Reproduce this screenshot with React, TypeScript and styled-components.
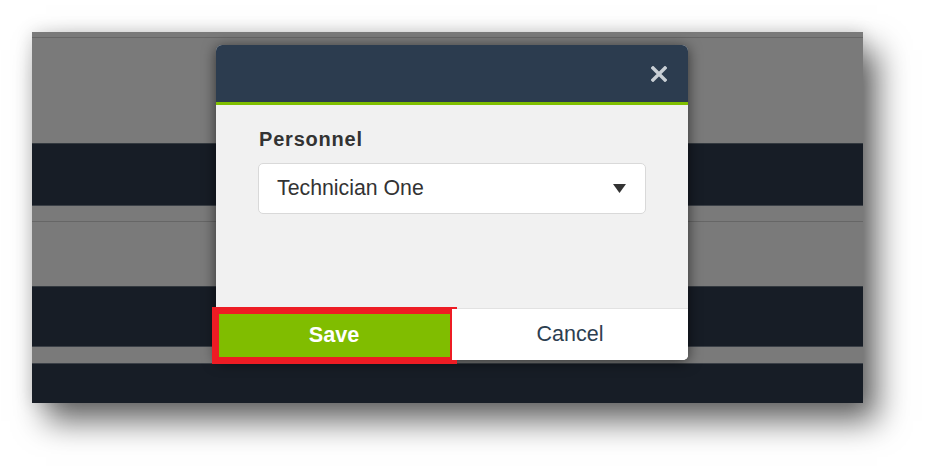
import React from "react";
import styled, { createGlobalStyle } from "styled-components";

const Global = createGlobalStyle`
  html, body { margin: 0; padding: 0; background: #ffffff; }
  body { width: 928px; height: 468px; overflow: hidden; font-family: "Liberation Sans", Arial, sans-serif; }
  * { box-sizing: border-box; }
`;

const Page = styled.div`
  width: 928px;
  height: 468px;
  padding: 32px 0 0 32px;
  background: #ffffff;
`;

const Shot = styled.div`
  position: relative;
  width: 831px;
  height: 371px;
  display: flex;
  flex-direction: column;
  box-shadow: 14px 18px 30px rgba(0, 0, 0, 0.6), 0 0 16px rgba(0, 0, 0, 0.14);
`;

type BandProps = { $tone: "gray" | "dark"; $h: number; $top?: string; $bottom?: string };

const Band = styled.div<BandProps>`
  flex: 0 0 ${(p) => p.$h}px;
  height: ${(p) => p.$h}px;
  background: ${(p) => (p.$tone === "gray" ? "#7a7a7a" : "#171d26")};
  border-top: ${(p) => (p.$top ? `1px solid ${p.$top}` : "none")};
  border-bottom: ${(p) => (p.$bottom ? `1px solid ${p.$bottom}` : "none")};
`;

const Modal = styled.div`
  position: absolute;
  left: 184px;
  top: 13px;
  width: 472px;
  height: 315px;
  display: flex;
  flex-direction: column;
  border-radius: 6px;
  background: #f1f1f1;
  box-shadow: 0 2px 14px rgba(0, 0, 0, 0.6);
`;

const Header = styled.div`
  flex: 0 0 60px;
  display: flex;
  align-items: center;
  justify-content: flex-end;
  padding: 1px 20px 0 0;
  background: #2c3c4f;
  border-radius: 6px 6px 0 0;
  border-bottom: 3px solid #80bf00;
`;

const CloseButton = styled.button`
  width: 18px;
  height: 18px;
  padding: 0;
  border: 0;
  background: transparent;
  display: flex;
  align-items: center;
  justify-content: center;
  cursor: pointer;
`;

const Body = styled.div`
  flex: 1 1 auto;
  padding: 22px 42px 0 42px;
  display: flex;
  flex-direction: column;
`;

const Label = styled.div`
  font-size: 20px;
  line-height: 24px;
  font-weight: 700;
  letter-spacing: 0.8px;
  color: #333333;
  padding-left: 1px;
  margin-bottom: 12px;
`;

const Select = styled.div`
  height: 51px;
  display: flex;
  align-items: center;
  justify-content: space-between;
  padding: 0 19px 0 18px;
  background: #ffffff;
  border: 1px solid #d9d9d9;
  border-radius: 5px;
  font-size: 21.3px;
  color: #333333;
`;

const Footer = styled.div`
  flex: 0 0 52px;
  display: flex;
  border-top: 1px solid #e2e2e2;
  background: #ffffff;
  border-radius: 0 0 5px 5px;
`;

const FooterButton = styled.button<{ $primary?: boolean }>`
  position: relative;
  flex: 1 1 50%;
  height: 51px;
  border: 0;
  margin: 0;
  padding: 0;
  font-family: "Liberation Sans", Arial, sans-serif;
  font-size: ${(p) => (p.$primary ? "21.7px" : "21.5px")};
  font-weight: ${(p) => (p.$primary ? 700 : 400)};
  color: ${(p) => (p.$primary ? "#ffffff" : "#2c3e50")};
  background: ${(p) => (p.$primary ? "#80bd00" : "#ffffff")};
  border-radius: ${(p) => (p.$primary ? "0 0 0 5px" : "0 0 5px 0")};
  cursor: pointer;
`;

const Highlight = styled.span`
  position: absolute;
  left: -4px;
  top: -2px;
  right: -5px;
  bottom: -4px;
  border: 7px solid #ed1c24;
  pointer-events: none;
`;

export default function App() {
  return (
    <>
      <Global />
      <Page>
        <Shot>
          <Band $tone="gray" $h={6} $bottom="#666666" />
          <Band $tone="gray" $h={105} />
          <Band $tone="dark" $h={63} $top="#33393f" $bottom="#3b4047" />
          <Band $tone="gray" $h={16} $bottom="#666666" />
          <Band $tone="gray" $h={64} />
          <Band $tone="dark" $h={61} $top="#33393f" $bottom="#3b4047" />
          <Band $tone="gray" $h={17} $bottom="#3b4047" />
          <Band $tone="dark" $h={39} />
          <Modal>
            <Header>
              <CloseButton aria-label="Close">
                <svg width="16" height="16" viewBox="0 0 16 16">
                  <path d="M2 2 L14 14 M14 2 L2 14" stroke="#c9cfd5" strokeWidth="3.4" strokeLinecap="square" />
                </svg>
              </CloseButton>
            </Header>
            <Body>
              <Label>Personnel</Label>
              <Select>
                <span>Technician One</span>
                <svg width="13" height="9" viewBox="0 0 13 9">
                  <path d="M0 0 L13 0 L6.5 9 Z" fill="#333333" />
                </svg>
              </Select>
            </Body>
            <Footer>
              <FooterButton $primary>
                Save
                <Highlight />
              </FooterButton>
              <FooterButton>Cancel</FooterButton>
            </Footer>
          </Modal>
        </Shot>
      </Page>
    </>
  );
}
